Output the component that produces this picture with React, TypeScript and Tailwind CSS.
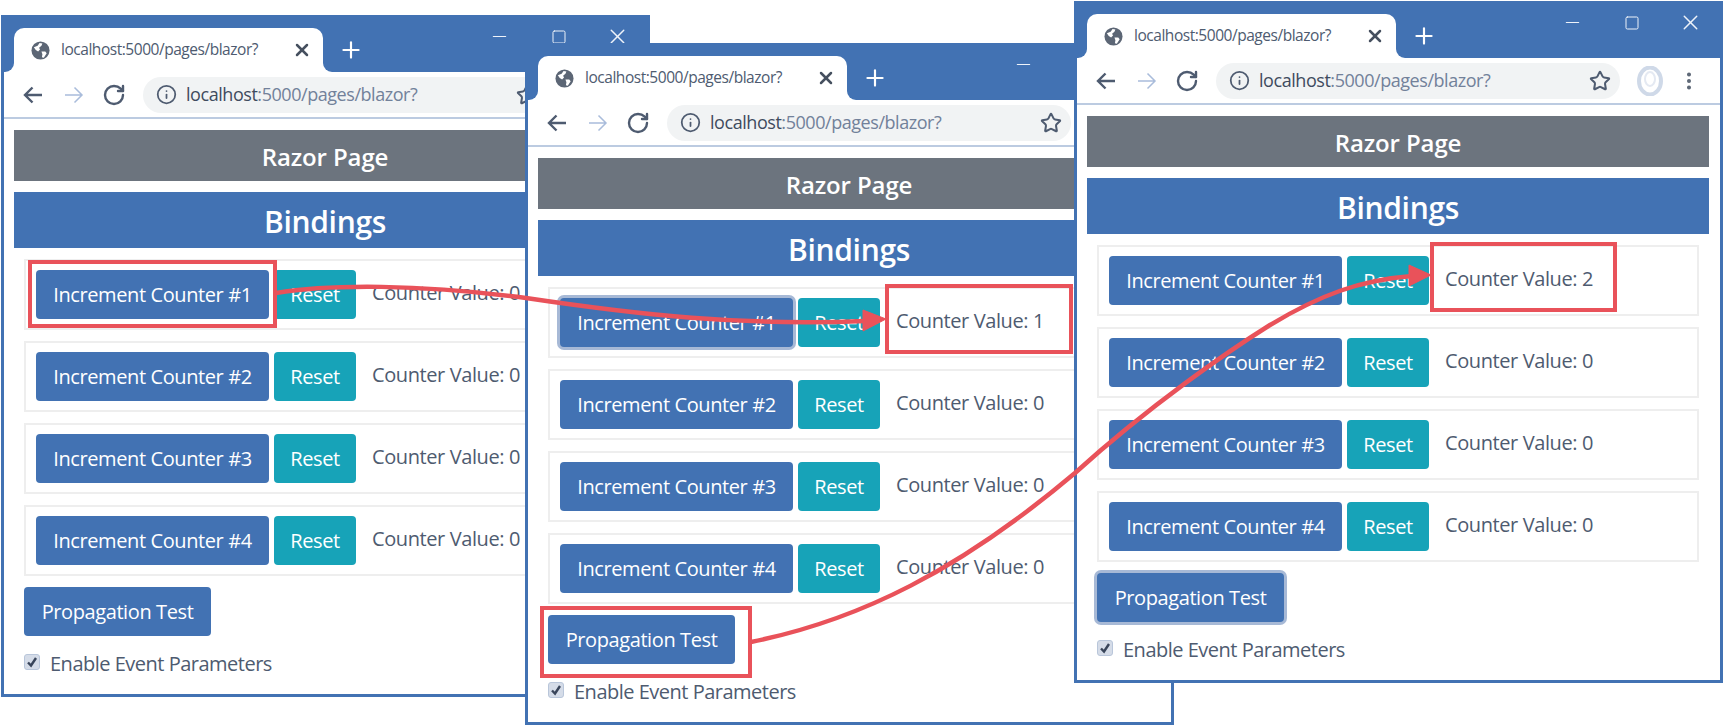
import { EllipsisVertical, Info, Minus, Plus, RotateCw, Square, Star, X } from 'lucide-react';

type WindowProps = {
  position: string;
  counterOne: number;
  focusFirst?: boolean;
  focusTest?: boolean;
};

function GlobeIcon() {
  return (
    <svg width="19" height="19" viewBox="0 0 20 20">
      <circle cx="10" cy="10" r="9.5" fill="#5c6675" />
      <path d="M3 6.5 L7 5 L9 2 L12 2.5 L11 5 L8.5 7 L9.5 9 L7.5 11 L5 9.5 Z" fill="#fff" />
      <path d="M11 11 L15 11 L16.5 13 L13.5 17.5 L11.5 17 L12 14 Z" fill="#fff" />
    </svg>
  );
}

function AvatarIcon() {
  return (
    <svg width="26" height="30" viewBox="0 0 26 30">
      <ellipse cx="13" cy="15" rx="11" ry="13.5" fill="none" stroke="#cfd9e8" strokeWidth="4" />
      <ellipse cx="13" cy="13" rx="5" ry="7" fill="none" stroke="#e4e9f2" strokeWidth="2" />
    </svg>
  );
}

// chrome's back/forward arrows are wider than the lucide ones
function NavArrow({ back, className }: { back?: boolean; className: string }) {
  return (
    <svg className={className} width="20" height="20" viewBox="0 0 20 20" fill="none" stroke="currentColor">
      {back ? (
        <path d="M19 10 H2 M9.5 2.5 L2 10 L9.5 17.5" strokeWidth="2.4" />
      ) : (
        <path d="M1 10 H18 M10.5 2.5 L18 10 L10.5 17.5" strokeWidth="1.5" />
      )}
    </svg>
  );
}

function Row({ label, value, focused }: { label: string; value: number; focused?: boolean }) {
  return (
    <div className="mb-[11px] flex h-[71px] items-center border-2 border-[#eeeeee] pl-[10px]">
      <div
        className={
          'flex h-[49px] w-[233px] items-center justify-center rounded bg-[#4272b3] pt-[1px] text-white ' +
          (focused ? 'ring-[3px] ring-[#a7b9d6]' : '')
        }
      >
        {label}
      </div>
      <div className="ml-[5px] flex h-[49px] w-[82px] items-center justify-center rounded bg-[#17a3b8] pt-[1px] text-white">
        Reset
      </div>
      <span className="mb-[3px] ml-[16px] whitespace-nowrap text-[#4e5b70]">Counter Value: {value}</span>
    </div>
  );
}

function BrowserWindow({ position, counterOne, focusFirst, focusTest }: WindowProps) {
  return (
    <div className={'absolute flex h-[682px] w-[649px] flex-col border-[3px] border-[#4272b3] bg-white ' + position}>
      {/* title bar */}
      <div className="flex h-[54px] shrink-0 items-start bg-[#4272b3] pl-[10px]">
        <div className="relative mt-[10px] flex h-[44px] w-[309px] items-center rounded-t-[10px] bg-white pl-[17px] text-[15.5px] tracking-[-0.03em] text-[#4e5b70]">
          <span className="absolute -left-[9px] bottom-0 h-[9px] w-[9px] bg-white">
            <span className="block h-full w-full rounded-br-[9px] bg-[#4272b3]" />
          </span>
          <span className="absolute -right-[9px] bottom-0 h-[9px] w-[9px] bg-white">
            <span className="block h-full w-full rounded-bl-[9px] bg-[#4272b3]" />
          </span>
          <GlobeIcon />
          <span className="ml-[11px]">localhost:5000/pages/blazor?</span>
          <X className="absolute right-[11px] top-[12px] text-[#46505f]" size={20} strokeWidth={3} />
        </div>
        <Plus className="ml-[15px] mt-[19px] text-white" size={26} strokeWidth={2} />
        <div className="ml-auto mt-[6px] flex items-center text-[#eef3fa]">
          <span className="flex w-[59px] justify-center">
            <Minus size={21} strokeWidth={1.4} />
          </span>
          <span className="flex w-[59px] justify-center">
            <Square size={16} strokeWidth={1.5} />
          </span>
          <span className="flex w-[59px] justify-center">
            <X size={25} strokeWidth={1.4} />
          </span>
        </div>
      </div>

      {/* toolbar */}
      <div className="flex h-[47px] shrink-0 items-center border-b-2 border-[#bccbe1] pl-[19px] pr-[11px]">
        <NavArrow back className="text-[#4e5b70]" />
        <NavArrow className="ml-[21px] text-[#a9bcdb]" />
        <RotateCw className="ml-[18px] text-[#4e5b70]" size={24} strokeWidth={2.4} />
        <div className="ml-[17px] flex h-[36px] w-[404px] shrink-0 items-center rounded-full bg-[#f1f3f4] pl-[13px] pr-[9px] text-[18px] tracking-[-0.025em]">
          <Info className="text-[#4e5b70]" size={21} strokeWidth={2} />
          <span className="ml-[9px] text-[#3f4b5e]">localhost</span>
          <span className="text-[#72819a]">:5000/pages/blazor?</span>
          <Star className="ml-auto text-[#4e5b70]" size={22} strokeWidth={2.2} />
        </div>
        <div className="ml-[17px]">
          <AvatarIcon />
        </div>
        <EllipsisVertical className="ml-[15px] text-[#5c6675]" size={22} strokeWidth={2.4} />
      </div>

      {/* page */}
      <div className="flex flex-col pl-[10px] pr-[11px] pt-[11px]">
        <div className="flex h-[51px] items-center justify-center bg-[#6c747e] pt-[3px] text-[24px] font-semibold tracking-[-0.005em] text-white">
          Razor Page
        </div>
        <div className="mt-[11px] flex h-[56px] items-center justify-center bg-[#4272b3] pt-[3px] text-[30px] font-semibold tracking-[-0.01em] text-white">
          Bindings
        </div>
        <div className="mx-[10px] mt-[11px]">
          <Row label="Increment Counter #1" value={counterOne} focused={focusFirst} />
          <Row label="Increment Counter #2" value={0} />
          <Row label="Increment Counter #3" value={0} />
          <Row label="Increment Counter #4" value={0} />
          <div
            className={
              'flex h-[49px] w-[187px] items-center justify-center rounded bg-[#4272b3] pt-[1px] text-white ' +
              (focusTest ? 'ring-[3px] ring-[#a7b9d6]' : '')
            }
          >
            Propagation Test
          </div>
          <div className="mt-[13px] flex items-center text-[#4e5b70]">
            <span className="mb-[4px] flex h-4 w-4 items-center justify-center rounded-[3px] border border-[#b9c6da] bg-[#d5dce8]">
              <svg width="12" height="12" viewBox="0 0 12 12">
                <path d="M2 6.5 L5 9.5 L10 2" fill="none" stroke="#39455a" strokeWidth="2.4" />
              </svg>
            </span>
            <span className="ml-[10px] tracking-[-0.025em]">Enable Event Parameters</span>
          </div>
        </div>
      </div>
    </div>
  );
}

export default function App() {
  return (
    <div
      className="relative h-[728px] w-[1725px] overflow-hidden bg-white text-[20px] tracking-[-0.02em]"
      style={{ fontFamily: '"Open Sans", "Liberation Sans", sans-serif' }}
    >
      <BrowserWindow position="left-[1px] top-[15px]" counterOne={0} />
      <BrowserWindow position="left-[525px] top-[43px]" counterOne={1} focusFirst />
      <BrowserWindow position="left-[1074px] top-[1px]" counterOne={2} focusTest />

      {/* call-outs drawn over the windows */}
      <svg className="absolute left-0 top-0" width="1725" height="728" fill="none" stroke="#e9525a">
        <rect x="30" y="262" width="245" height="64" strokeWidth="4" />
        <rect x="887" y="286" width="184" height="66" strokeWidth="4" />
        <rect x="542" y="608" width="208" height="68" strokeWidth="4" />
        <rect x="1432" y="244" width="183" height="66" strokeWidth="4" />
        <path d="M276 293 C330 284 420 284 526 298 C640 315 740 326 866 321" strokeWidth="4.5" />
        <path d="M863 310 L886 319 L863 331 Z" fill="#e9525a" strokeWidth="1" />
        <path d="M751 642 C860 620 960 570 1075 473 C1150 405 1230 350 1270 325 C1320 295 1360 280 1412 276" strokeWidth="4.5" />
        <path d="M1409 265 L1431 275 L1409 286 Z" fill="#e9525a" strokeWidth="1" />
      </svg>
    </div>
  );
}
